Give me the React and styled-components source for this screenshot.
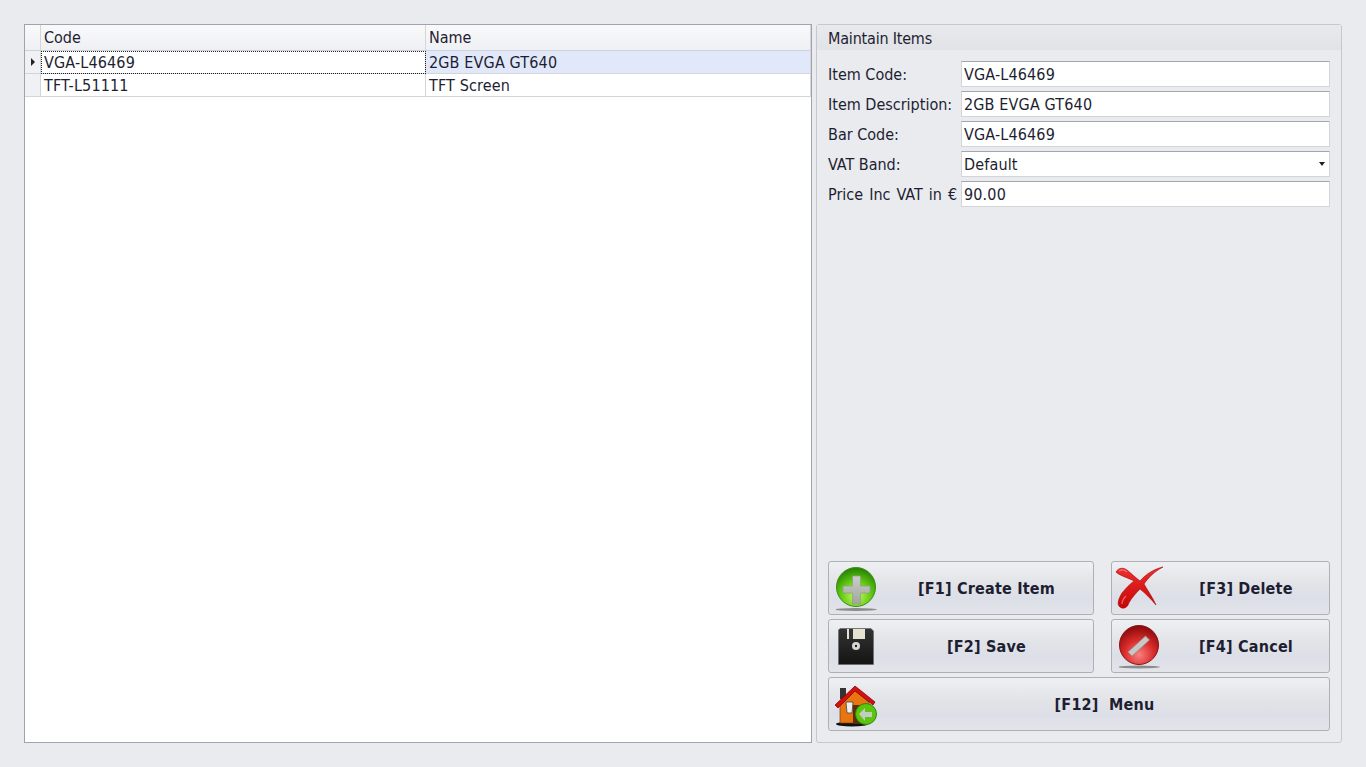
import styled, { createGlobalStyle } from 'styled-components';

const GlobalStyle = createGlobalStyle`
  html, body {
    margin: 0;
    height: 100%;
    background: #e9ebef;
  }
  * {
    box-sizing: border-box;
  }
`;

const Page = styled.div`
  width: 1366px;
  height: 767px;
  padding: 24px;
  display: flex;
  gap: 4px;
  overflow: hidden;
  font-family: "DejaVu Sans Condensed", "DejaVu Sans", sans-serif;
  font-size: 16px;
  color: #1e1e32;
`;

const GridBox = styled.div`
  width: 788px;
  height: 719px;
  background: #fff;
  border: 1px solid #a0a3ad;
`;

const GridRow = styled.div`
  display: grid;
  grid-template-columns: 16px 385px 385px;
  height: ${(p) => p.$height}px;
`;

const HeaderCell = styled.div`
  background: linear-gradient(#f9f9fb, #eff0f3);
  border-right: 1px solid #d3d5db;
  border-bottom: 1px solid #cfd1d8;
  padding: 3px 0 0 3px;
  line-height: 20px;
`;

const Indicator = styled.div`
  background: #f0f1f4;
  border-right: 1px solid #d3d5db;
  border-bottom: 1px solid #d3d5db;
  display: flex;
  align-items: center;
  justify-content: center;
`;

const Arrow = styled.span`
  width: 0;
  height: 0;
  border-left: 4px solid #222;
  border-top: 4px solid transparent;
  border-bottom: 4px solid transparent;
`;

const Cell = styled.div`
  border-right: 1px solid #d3d5db;
  border-bottom: 1px solid #d3d5db;
  padding: 1px 0 0 3px;
  line-height: 21px;
  letter-spacing: 0.15px;
  background: ${(p) => (p.$selected ? '#e1e8f9' : '#fff')};
  outline: ${(p) => (p.$focused ? '1px dotted #222' : 'none')};
  outline-offset: -1px;
`;

const Panel = styled.section`
  width: 526px;
  height: 719px;
  border: 1px solid #c6c8ce;
  border-radius: 3px;
  display: flex;
  flex-direction: column;
  padding-bottom: 11px;
`;

const PanelTitle = styled.div`
  height: 25px;
  padding: 4px 0 0 11px;
  line-height: 20px;
  letter-spacing: -0.2px;
  background: linear-gradient(#e8e9ec, #e1e3e7);
`;

const Form = styled.div`
  padding: 11px 11px 0;
  display: flex;
  flex-direction: column;
  gap: 4px;
`;

const FormRow = styled.div`
  display: flex;
  height: 26px;
  align-items: center;
`;

const Label = styled.label`
  width: 133px;
  white-space: nowrap;
  word-spacing: ${(p) => p.$wordGap || 0}px;
`;

const Field = styled.div`
  position: relative;
  width: 369px;
  height: 26px;
  background: #fff;
  border: 1px solid #d3d5da;
  border-top-color: #a3a6b0;
  padding-left: 2px;
  line-height: 25px;
  letter-spacing: 0.15px;
`;

const Caret = styled.span`
  position: absolute;
  right: 4px;
  top: 10px;
  width: 0;
  height: 0;
  border-top: 4px solid #222;
  border-left: 3.5px solid transparent;
  border-right: 3.5px solid transparent;
`;

const Actions = styled.div`
  margin-top: auto;
  padding: 0 11px;
  display: grid;
  grid-template-columns: 266px 219px;
  justify-content: space-between;
  grid-auto-rows: 54px;
  gap: 4px 0;
`;

const ActionButton = styled.button`
  position: relative;
  grid-column: ${(p) => (p.$wide ? '1 / -1' : 'auto')};
  border: 1px solid #aeb0b8;
  border-radius: 3px;
  background: linear-gradient(#eef0f3 0%, #e3e4e8 40%, #dcdfe7 70%, #e2e4e9 100%);
  font-family: "DejaVu Sans Condensed", "DejaVu Sans", sans-serif;
  font-weight: 700;
  font-size: 16px;
  letter-spacing: 0.2px;
  color: #1e1e32;
  padding: 0 0 0 51px;
  white-space: pre;
`;

const IconSlot = styled.span`
  position: absolute;
  left: ${(p) => p.$left}px;
  top: ${(p) => p.$top}px;
  display: block;
  line-height: 0;
`;

function PlusIcon() {
  return (
    <svg width="42" height="46" viewBox="0 0 42 46">
      <defs>
        <radialGradient id="plusBall" cx="50%" cy="72%" r="68%">
          <stop offset="0%" stopColor="#d2f76a" />
          <stop offset="55%" stopColor="#62cc10" />
          <stop offset="100%" stopColor="#2c8507" />
        </radialGradient>
        <linearGradient id="plusBar" x1="0" y1="0" x2="0" y2="1">
          <stop offset="0%" stopColor="#c9cdc6" />
          <stop offset="100%" stopColor="#9fa89c" />
        </linearGradient>
      </defs>
      <ellipse cx="20" cy="43.5" rx="21" ry="1.5" fill="#6f6f6f" opacity="0.75" />
      <circle cx="20" cy="21" r="19.5" fill="url(#plusBall)" stroke="#3c8f12" />
      <path d="M16.5 10h8v10h9.5v7h-9.5v11h-8V27H7v-7h9.5z" fill="url(#plusBar)" stroke="#8f9a8c" strokeWidth="0.7" />
    </svg>
  );
}

function DiskIcon() {
  return (
    <svg width="36" height="37" viewBox="0 0 36 37">
      <defs>
        <linearGradient id="diskBody" x1="0" y1="0" x2="0" y2="1">
          <stop offset="0%" stopColor="#333" />
          <stop offset="100%" stopColor="#141414" />
        </linearGradient>
      </defs>
      <path d="M2 0.5h31l2.5 2.5v33.5H0.5V2z" fill="url(#diskBody)" stroke="#666" strokeWidth="0.6" />
      <rect x="9" y="1" width="18" height="10" fill="#e6e4cf" />
      <rect x="11" y="1" width="4" height="10" fill="#333" />
      <circle cx="18" cy="18" r="4" fill="#d8d8d0" />
      <circle cx="18" cy="18" r="1.2" fill="#222" />
    </svg>
  );
}

function HomeIcon() {
  return (
    <svg width="46" height="44" viewBox="0 0 46 44">
      <ellipse cx="18" cy="39" rx="16" ry="2.5" fill="#111" />
      <rect x="6" y="3" width="6" height="11" fill="#333" />
      <path d="M6 17L21 5 35 17v21H6z" fill="#e8750f" stroke="#7a3c05" strokeWidth="0.7" />
      <path d="M1 20L21 1 41 17 39 20 21 6 4 23z" fill="#d80f0f" stroke="#6b0505" strokeWidth="0.7" />
      <path d="M12 17h7l-1 11h-5z" fill="#eee" stroke="#444" strokeWidth="0.8" />
      <rect x="19" y="20" width="8" height="19" fill="#5a2f08" />
      <circle cx="32" cy="29" r="10.5" fill="#5cc60e" stroke="#2f8a08" />
      <path d="M25 29l6-6v4h7v5h-7v4z" fill="#c4ccc0" />
    </svg>
  );
}

function CrossIcon() {
  return (
    <svg width="50" height="46" viewBox="0 0 50 46">
      <defs>
        <linearGradient id="crossFill" x1="0" y1="0" x2="0" y2="1">
          <stop offset="0%" stopColor="#ec2f2f" />
          <stop offset="100%" stopColor="#c80606" />
        </linearGradient>
      </defs>
      <path
        d="M1 7C3 3 8 2 12 5 17 9 21 13 25 16 31 9 39 4 48 2 40 6 33 13 29 19 33 26 38 33 41 40 36 34 30 28 25 24 20 29 15 35 13 40 11 44 6 44 4 41 2 38 4 33 7 28 11 23 15 19 19 16 14 13 5 11 1 7z"
        fill="url(#crossFill)"
        stroke="#a80404"
        strokeWidth="0.6"
      />
      <path d="M4 6c3-2 6-1 8 1" stroke="#f7a3a3" strokeWidth="1.2" fill="none" opacity="0.6" />
      <path d="M7 39c0-3 2-6 4-8" stroke="#f7a3a3" strokeWidth="1.2" fill="none" opacity="0.6" />
    </svg>
  );
}

function CancelIcon() {
  return (
    <svg width="42" height="46" viewBox="0 0 42 46">
      <defs>
        <radialGradient id="cancelBall" cx="50%" cy="75%" r="70%">
          <stop offset="0%" stopColor="#f88080" />
          <stop offset="55%" stopColor="#d92a2a" />
          <stop offset="100%" stopColor="#8f0d0d" />
        </radialGradient>
      </defs>
      <ellipse cx="20" cy="43" rx="21" ry="1.5" fill="#6f6f6f" opacity="0.75" />
      <circle cx="20" cy="21" r="19.5" fill="url(#cancelBall)" stroke="#8b1212" />
      <path d="M9 28L26.5 12 30.5 16 13 32z" fill="#c8c8c4" stroke="#8f8f8b" strokeWidth="0.7" />
    </svg>
  );
}

export default function App() {
  return (
    <>
      <GlobalStyle />
      <Page>
        <GridBox>
          <GridRow $height={26}>
            <HeaderCell />
            <HeaderCell>Code</HeaderCell>
            <HeaderCell>Name</HeaderCell>
          </GridRow>
          <GridRow $height={23}>
            <Indicator><Arrow /></Indicator>
            <Cell $focused>VGA-L46469</Cell>
            <Cell $selected>2GB EVGA GT640</Cell>
          </GridRow>
          <GridRow $height={23}>
            <Indicator />
            <Cell>TFT-L51111</Cell>
            <Cell>TFT Screen</Cell>
          </GridRow>
        </GridBox>
        <Panel>
          <PanelTitle>Maintain Items</PanelTitle>
          <Form>
            <FormRow><Label>Item Code:</Label><Field>VGA-L46469</Field></FormRow>
            <FormRow><Label>Item Description:</Label><Field>2GB EVGA GT640</Field></FormRow>
            <FormRow><Label>Bar Code:</Label><Field>VGA-L46469</Field></FormRow>
            <FormRow><Label>VAT Band:</Label><Field>Default<Caret /></Field></FormRow>
            <FormRow><Label $wordGap={1.5}>Price Inc VAT in €</Label><Field>90.00</Field></FormRow>
          </Form>
          <Actions>
            <ActionButton>
              <IconSlot $left={7} $top={4}><PlusIcon /></IconSlot>
              [F1] Create Item
            </ActionButton>
            <ActionButton>
              <IconSlot $left={3} $top={3}><CrossIcon /></IconSlot>
              [F3] Delete
            </ActionButton>
            <ActionButton>
              <IconSlot $left={9} $top={8}><DiskIcon /></IconSlot>
              [F2] Save
            </ActionButton>
            <ActionButton>
              <IconSlot $left={7} $top={4}><CancelIcon /></IconSlot>
              [F4] Cancel
            </ActionButton>
            <ActionButton $wide>
              <IconSlot $left={5} $top={7}><HomeIcon /></IconSlot>
              {'[F12]  Menu'}
            </ActionButton>
          </Actions>
        </Panel>
      </Page>
    </>
  );
}
